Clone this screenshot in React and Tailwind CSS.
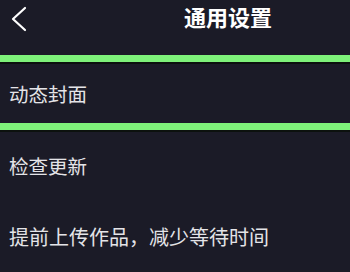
const Divider = () => (
  <div className="flex flex-col">
    <div className="h-[7px] bg-[#7ef27a]" />
    <div className="h-[2px] bg-[#0c110e]" />
  </div>
);

const App = () => {
  return (
    <div
      className="flex h-[272px] w-[350px] flex-col overflow-hidden bg-[#1b1b27] text-[#e4e4e8]"
      style={{ fontFamily: '"Noto Sans CJK SC", "Noto Sans", sans-serif' }}
    >
      <header className="relative flex h-[55px] items-start justify-center pt-[2px]">
        <svg className="absolute left-[10px] top-[6px]" width="18" height="26" viewBox="0 0 18 26" fill="none">
          <polyline points="15,2 3,13 15,24" stroke="white" strokeWidth="2.2" strokeLinecap="round" strokeLinejoin="round" />
        </svg>
        <h1 className="ml-[106px] text-[22px] font-bold leading-[28px] text-white">通用设置</h1>
      </header>
      <Divider />
      <div className="flex h-[59px] items-center px-[9px] text-[19.5px]">动态封面</div>
      <Divider />
      <div className="flex h-[66px] items-center px-[9px] pt-[2px] text-[19.5px]">检查更新</div>
      <div className="flex h-[74px] items-center px-[9px] pt-[4px] text-[20px]">提前上传作品，减少等待时间</div>
    </div>
  );
};

export default App;
